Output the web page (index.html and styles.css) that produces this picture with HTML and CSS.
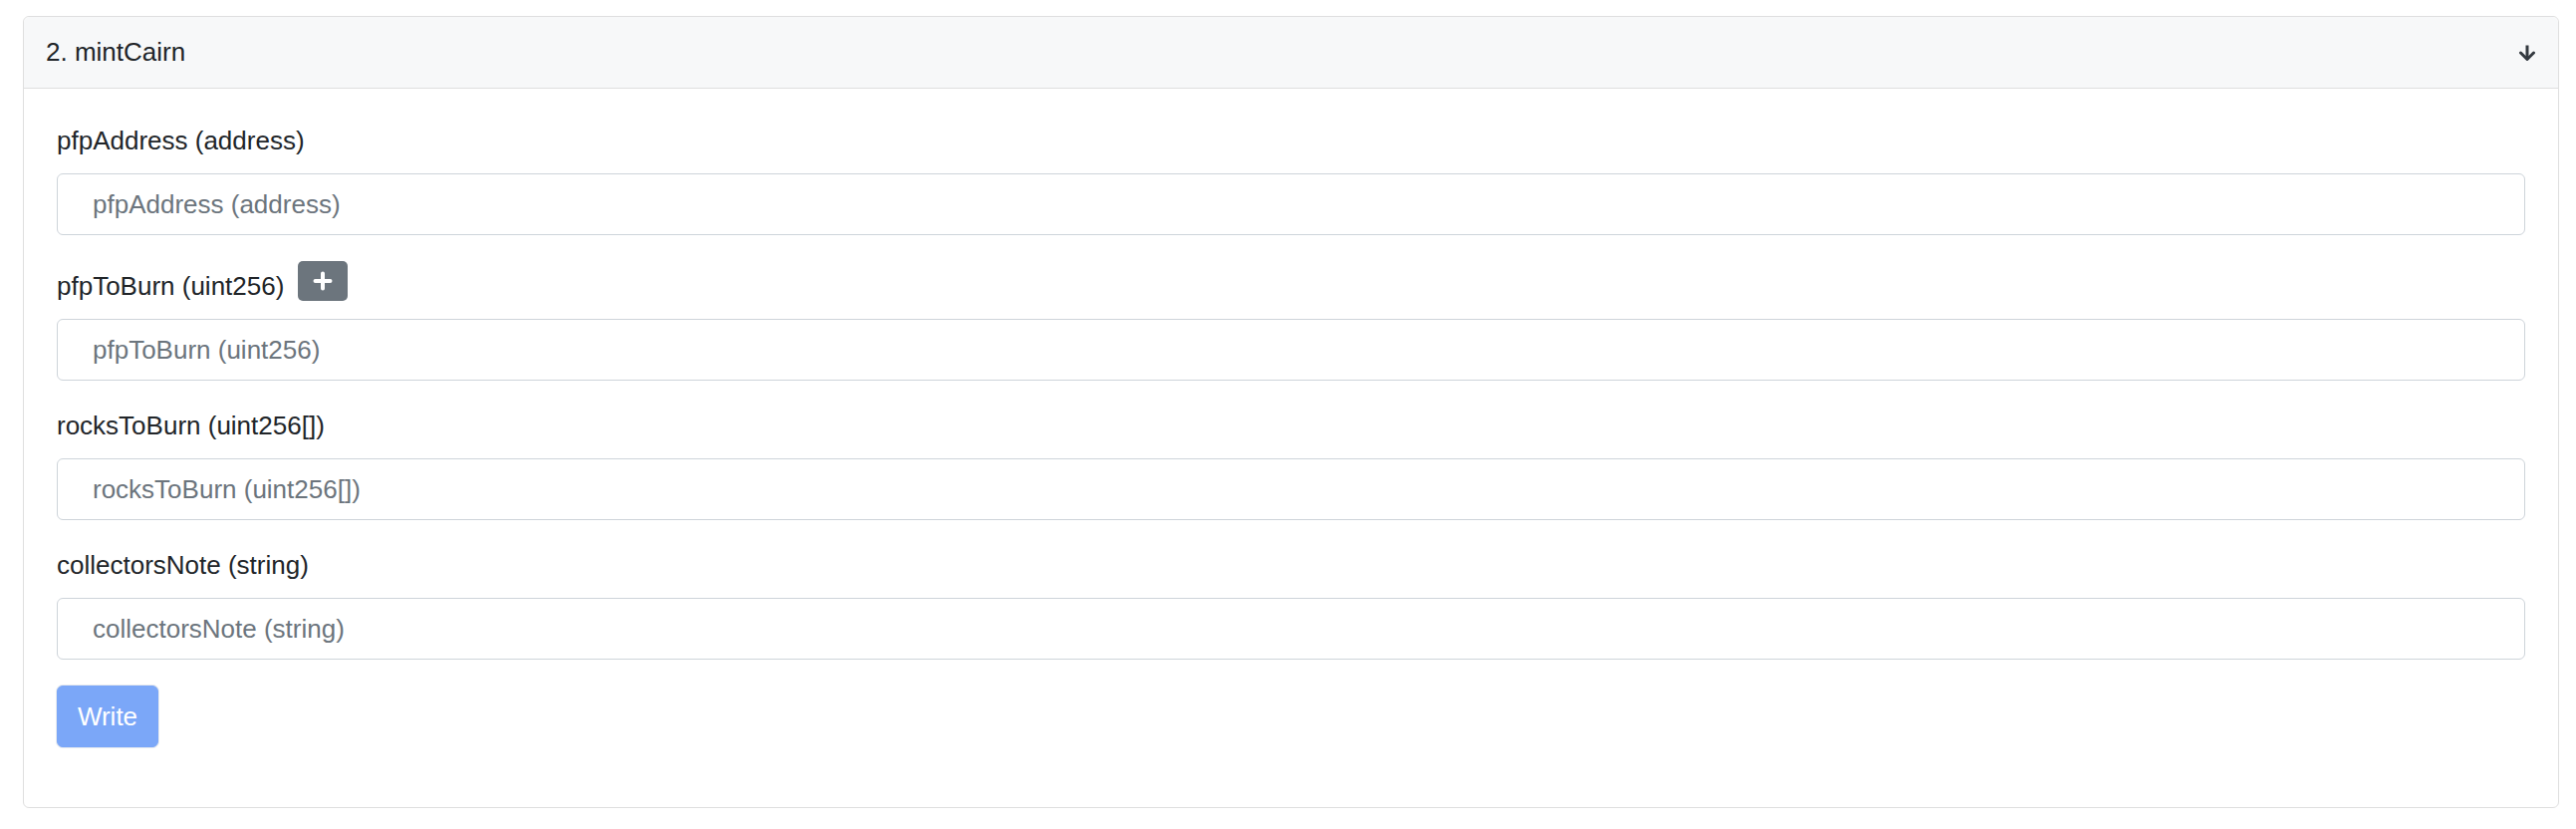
FILE: index.html
```html
<!DOCTYPE html>
<html lang="en">
<head>
<meta charset="utf-8">
<title>mintCairn</title>
<link rel="stylesheet" href="styles.css">
</head>
<body>
<div class="card">
  <div class="card-header">
    <span class="card-title">2. mintCairn</span>
    <svg class="arrow" width="18" height="18" viewBox="0 0 18 18" aria-hidden="true">
      <path d="M9 1.5V15.5" fill="none" stroke="#343a40" stroke-width="3"/>
      <path d="M2.5 9 L9 15.5 L15.5 9" fill="none" stroke="#343a40" stroke-width="3" stroke-linejoin="round" stroke-linecap="round"/>
    </svg>
  </div>
  <div class="card-body">
    <div class="form-group">
      <label class="label">pfpAddress (address)</label>
      <input class="input" type="text" placeholder="pfpAddress (address)">
    </div>
    <div class="form-group">
      <div class="label-row">
        <label class="label label-inline">pfpToBurn (uint256)</label>
        <button class="btn-add" type="button" aria-label="add">
          <svg width="20" height="20" viewBox="0 0 20 20" aria-hidden="true">
            <path d="M10 2.5V17.5 M2.5 10H17.5" fill="none" stroke="#fff" stroke-width="4" stroke-linecap="round"/>
          </svg>
        </button>
      </div>
      <input class="input" type="text" placeholder="pfpToBurn (uint256)">
    </div>
    <div class="form-group">
      <label class="label">rocksToBurn (uint256[])</label>
      <input class="input" type="text" placeholder="rocksToBurn (uint256[])">
    </div>
    <div class="form-group">
      <label class="label">collectorsNote (string)</label>
      <input class="input" type="text" placeholder="collectorsNote (string)">
    </div>
    <button class="btn-write" type="button" disabled>Write</button>
  </div>
</div>
</body>
</html>
```

FILE: styles.css
```css
html, body {
  margin: 0;
  padding: 0;
  background: #ffffff;
}

body {
  font-family: "Liberation Sans", Arial, Helvetica, sans-serif;
  color: #212529;
}

.card {
  margin: 16px 17px 0 23px;
  border: 1px solid #dfdfdf;
  border-radius: 6px;
  background: #ffffff;
}

.card-header {
  display: flex;
  justify-content: space-between;
  align-items: center;
  padding: 16px 22px;
  background: #f7f8f9;
  border-bottom: 1px solid #dfdfdf;
  border-radius: 6px 6px 0 0;
  font-size: 26px;
  line-height: 39px;
}

.card-title {
  color: #212529;
}

.arrow {
  display: block;
}

.card-body {
  padding: 33px 33px 60px;
}

.form-group {
  margin-bottom: 26px;
}

.label {
  display: block;
  font-size: 26px;
  line-height: 39px;
  margin-bottom: 13px;
}

.label-row {
  display: flex;
  align-items: flex-end;
  gap: 14px;
  height: 45px;
  margin-bottom: 13px;
}

.label-inline {
  margin-bottom: 0;
}

.btn-add {
  align-self: flex-start;
  display: flex;
  align-items: center;
  justify-content: center;
  width: 50px;
  height: 40px;
  padding: 0;
  border: none;
  border-radius: 5px;
  background: #6c757d;
}

.btn-add svg {
  display: block;
}

.input {
  display: block;
  box-sizing: border-box;
  width: 100%;
  height: 62px;
  margin: 0;
  padding: 0 35px;
  border: 1px solid #ced4da;
  border-radius: 6px;
  background: #ffffff;
  font-family: "Liberation Sans", Arial, Helvetica, sans-serif;
  font-size: 26px;
  color: #495057;
  outline: none;
}

.input::placeholder {
  color: #6c757d;
  opacity: 1;
}

.btn-write {
  display: block;
  box-sizing: border-box;
  width: 102px;
  height: 62px;
  padding: 0;
  border: 1px solid #7ba7f8;
  border-radius: 6px;
  background: #7ba7f8;
  box-shadow: 0 0 0 1px #e8ebef;
  color: #ffffff;
  font-family: "Liberation Sans", Arial, Helvetica, sans-serif;
  font-size: 26px;
  line-height: 1;
}
```
